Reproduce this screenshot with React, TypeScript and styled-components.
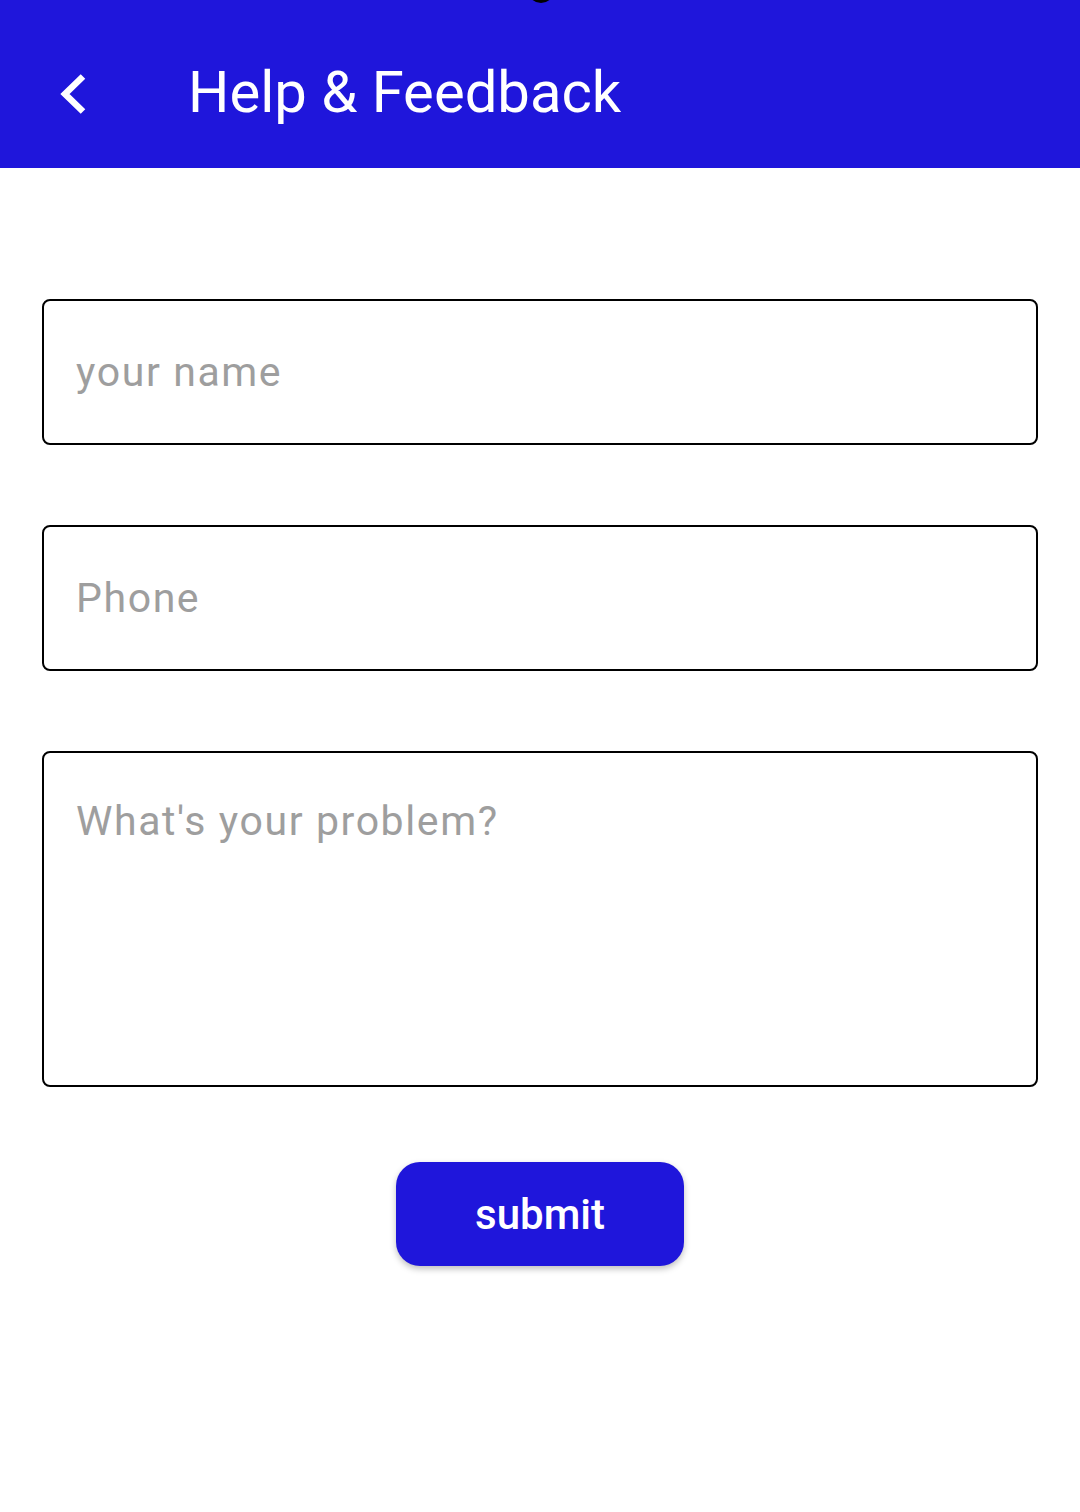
import React from "react";
import styled, { createGlobalStyle } from "styled-components";

const Global = createGlobalStyle`
  html, body { margin: 0; padding: 0; background: #ffffff; }
  body { font-family: Roboto, "Noto Sans", Arial, sans-serif; }
  * { box-sizing: border-box; }
`;

const Page = styled.div`
  width: 1080px;
  min-height: 1512px;
  background: #ffffff;
  position: relative;
`;

const Header = styled.header`
  height: 168px;
  background: #1f16db;
  display: flex;
  align-items: center;
  padding: 16px 0 0 58px;
  position: relative;
`;

const Notch = styled.div`
  position: absolute;
  left: 528px;
  top: -22px;
  width: 26px;
  height: 25px;
  border-radius: 50%;
  background: #000;
`;

const BackButton = styled.button`
  width: 32px;
  height: 40px;
  padding: 0;
  border: none;
  background: transparent;
  display: flex;
  align-items: center;
  justify-content: flex-start;
  margin-top: 4px;
  cursor: pointer;
`;

const Title = styled.h1`
  margin: 0 0 0 98px;
  color: #ffffff;
  font-family: Roboto, sans-serif;
  font-weight: 400;
  font-size: 58px;
  line-height: 1;
`;

const Form = styled.form`
  display: flex;
  flex-direction: column;
  gap: 80px;
  padding: 131px 42px 0 42px;
`;

const Field = styled.input`
  width: 996px;
  height: 146px;
  border: 2.5px solid #000;
  border-radius: 8px;
  padding: 0 0 0 32px;
  font-family: Roboto, sans-serif;
  font-size: 41px;
  letter-spacing: 1.6px;
  color: #222;
  outline: none;
  &::placeholder { color: #9e9e9e; }
`;

const Area = styled.textarea`
  width: 996px;
  height: 336px;
  border: 2.5px solid #000;
  border-radius: 8px;
  padding: 40px 0 0 32px;
  font-family: Roboto, sans-serif;
  font-size: 41px;
  letter-spacing: 1.6px;
  line-height: 56px;
  color: #222;
  resize: none;
  outline: none;
  &::placeholder { color: #9e9e9e; }
`;

const Actions = styled.div`
  display: flex;
  justify-content: center;
  margin-top: -5px;
`;

const Submit = styled.button`
  width: 288px;
  height: 104px;
  border: none;
  border-radius: 24px;
  background: #1f16db;
  color: #ffffff;
  font-family: Roboto, sans-serif;
  font-weight: 500;
  font-size: 42px;
  box-shadow: 0 3px 6px rgba(0, 0, 0, 0.25);
  cursor: pointer;
`;

export default function App() {
  return (
    <Page>
      <Global />
      <Header>
        <Notch />
        <BackButton aria-label="back">
          <svg width="30" height="40" viewBox="0 0 30 40">
            <path d="M25 2.5 L7 20 L25 37.5" fill="none" stroke="#fff" strokeWidth="6.5" strokeLinejoin="miter" />
          </svg>
        </BackButton>
        <Title>Help &amp; Feedback</Title>
      </Header>
      <Form onSubmit={(e) => e.preventDefault()}>
        <Field placeholder="your name" />
        <Field placeholder="Phone" />
        <Area placeholder="What's your problem?" />
        <Actions>
          <Submit type="submit">submit</Submit>
        </Actions>
      </Form>
    </Page>
  );
}
